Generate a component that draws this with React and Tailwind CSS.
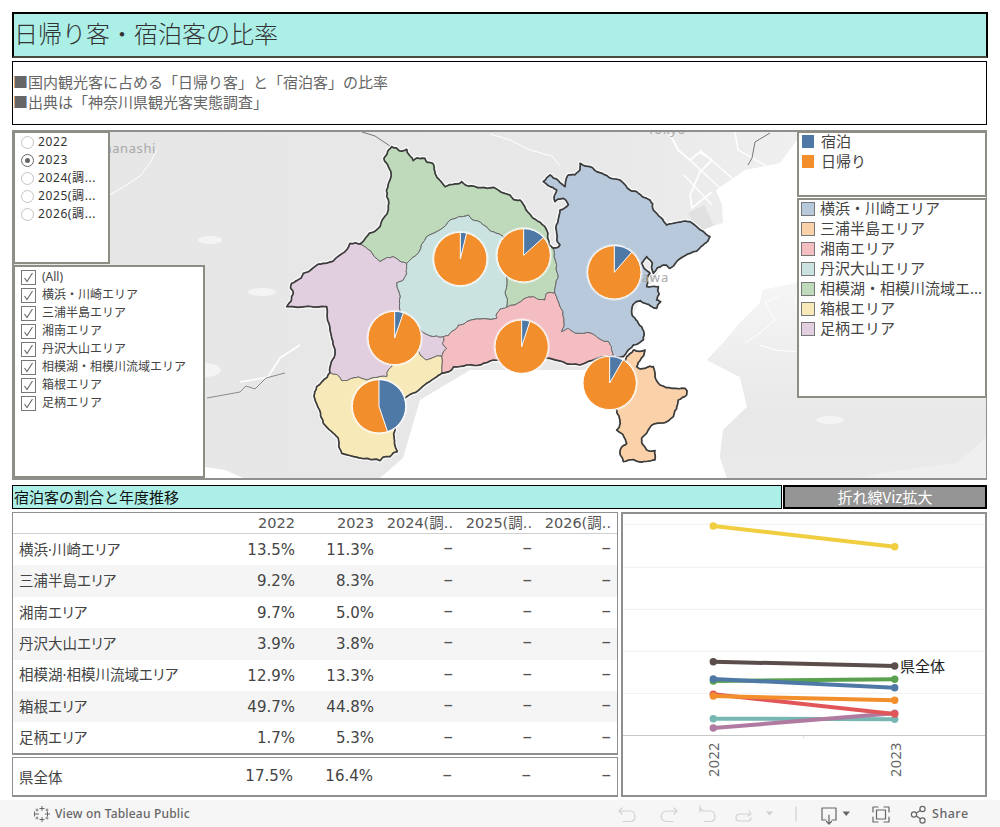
import React from "react";

const BLUE = "#4e79a7";
const ORANGE = "#f28e2b";

const hash = (x, y) => {
  const s = Math.sin(x * 12.9898 + y * 78.233) * 43758.5453;
  return s - Math.floor(s) - 0.5;
};
const jagPts = (pts, amp = 15, depth = 3) => {
  let cur = pts;
  let a = amp;
  for (let d = 0; d < depth; d++) {
    const out = [];
    cur.forEach((p, i) => {
      const q = cur[(i + 1) % cur.length];
      const mx = (p[0] + q[0]) / 2;
      const my = (p[1] + q[1]) / 2;
      const len = Math.hypot(p[0] - q[0], p[1] - q[1]);
      const k = Math.min(1, len / 36) * a;
      out.push(p, [mx + hash(mx, my) * k, my + hash(my, mx) * k]);
    });
    cur = out;
    a *= 0.65;
  }
  return cur;
};
const toD = (pts) => "M" + pts.map((p) => p[0].toFixed(1) + " " + p[1].toFixed(1)).join("L") + "Z";

const regions = [
  { fill: "#bfd9bb", pts: [[335,50],[355,60],[380,58],[400,92],[435,85],[458,100],[465,130],[495,170],[545,155],[580,168],[640,172],[690,195],[720,210],[760,265],[800,300],[820,355],[835,440],[825,490],[800,490],[795,510],[760,500],[735,505],[680,532],[680,440],[670,320],[610,285],[565,255],[510,270],[440,320],[380,400],[340,380],[300,395],[240,342],[300,290],[325,240],[320,200],[330,150],[325,110],[312,85]] },
  { fill: "#cae3e0", pts: [[565,255],[610,285],[670,320],[680,440],[680,532],[655,545],[650,565],[560,575],[535,585],[515,605],[490,620],[470,618],[425,605],[360,545],[350,458],[380,430],[380,400],[440,320],[510,270]] },
  { fill: "#e1cede", pts: [[210,340],[240,342],[300,395],[340,380],[380,400],[380,430],[350,458],[360,545],[425,605],[470,618],[490,620],[488,640],[500,655],[485,678],[440,690],[415,665],[350,690],[335,710],[320,740],[260,750],[215,745],[185,752],[150,728],[165,660],[150,600],[140,530],[20,530],[40,490],[35,460],[70,430],[130,400],[180,375]] },
  { fill: "#f8e9b9", pts: [[150,728],[185,752],[215,745],[260,750],[320,740],[335,710],[350,690],[415,665],[440,690],[485,678],[485,730],[440,760],[380,800],[345,900],[352,965],[330,980],[300,992],[260,985],[185,970],[175,925],[130,880],[105,810],[110,770]] },
  { fill: "#f3bdc1", pts: [[488,640],[490,620],[515,605],[535,585],[560,575],[650,565],[655,545],[680,532],[735,505],[760,500],[795,510],[800,490],[825,490],[850,560],[845,605],[865,595],[910,610],[965,630],[995,650],[1000,680],[900,705],[810,685],[640,690],[560,705],[485,730],[485,678],[500,655]] },
  { fill: "#b8c9db", pts: [[900,100],[950,125],[1020,150],[1070,185],[1110,210],[1120,240],[1160,285],[1230,275],[1290,320],[1270,345],[1230,370],[1170,415],[1150,405],[1120,430],[1100,380],[1085,400],[1110,430],[1100,470],[1135,470],[1130,510],[1142,515],[1130,535],[1095,520],[1070,515],[1055,545],[1065,565],[1085,590],[1090,630],[1060,645],[1030,680],[1000,680],[995,650],[965,630],[910,610],[865,595],[845,605],[850,560],[825,490],[835,440],[820,355],[840,345],[830,310],[840,240],[865,225],[850,205],[825,215],[830,180],[790,155],[810,135],[855,170],[865,135],[900,120]] },
  { fill: "#fbd1a9", pts: [[1060,660],[1095,660],[1070,710],[1095,715],[1120,710],[1140,765],[1215,775],[1220,795],[1195,810],[1190,835],[1180,860],[1130,880],[1085,925],[1100,960],[1125,962],[1125,990],[1075,995],[1030,995],[1020,965],[1040,940],[1010,900],[1020,870],[1010,840],[1000,800],[1040,680]] },
].map((r) => ({ ...r, jag: jagPts(r.pts) }));

// Edges that belong to one region only are the prefecture's outline.
const outline = (() => {
  const count = new Map();
  regions.forEach((r) => {
    r.jag.forEach((p, i) => {
      const q = r.jag[(i + 1) % r.jag.length];
      const a = p[0].toFixed(1) + "," + p[1].toFixed(1);
      const b = q[0].toFixed(1) + "," + q[1].toFixed(1);
      const key = a < b ? a + "|" + b : b + "|" + a;
      count.set(key, { n: (count.get(key)?.n || 0) + 1, a: p, b: q });
    });
  });
  let d = "";
  count.forEach((v) => {
    if (v.n === 1) d += `M${v.a[0].toFixed(1)} ${v.a[1].toFixed(1)}L${v.b[0].toFixed(1)} ${v.b[1].toFixed(1)}`;
  });
  return d;
})();

const pies = [
  { x: 541, y: 387, v: 3.8 },
  { x: 731, y: 376, v: 13.3 },
  { x: 1003, y: 427, v: 11.3 },
  { x: 725, y: 650, v: 5.0 },
  { x: 344, y: 624, v: 5.3 },
  { x: 297, y: 829, v: 44.8 },
  { x: 989, y: 759, v: 8.3 },
];

function Pie({ x, y, v }) {
  const r = 80;
  const a = (v / 100) * 2 * Math.PI;
  const ex = x + r * Math.sin(a);
  const ey = y - r * Math.cos(a);
  return (
    <g>
      <circle cx={x} cy={y} r={r + 5} fill="#ffffff" opacity="0.5" />
      <circle cx={x} cy={y} r={r} fill={ORANGE} stroke="#ffffff" strokeWidth="3" />
      <path d={`M${x} ${y}L${x} ${y - r}A${r} ${r} 0 0 1 ${ex} ${ey}Z`} fill={BLUE} stroke="#ffffff" strokeWidth="3" />
    </g>
  );
}

function MapCanvas() {
  return (
    <svg className="absolute inset-0 block" width="972" height="346" viewBox="14 132 972 346">
      <defs>
        <linearGradient id="landH" x1="0" x2="1" y1="0" y2="0">
          <stop offset="0" stopColor="#e6e6e6" />
          <stop offset="0.6" stopColor="#e8e8e8" />
          <stop offset="0.8" stopColor="#efefef" />
          <stop offset="1" stopColor="#efefef" />
        </linearGradient>
        <linearGradient id="landV" x1="0" x2="0" y1="0" y2="1">
          <stop offset="0" stopColor="#f7f7f7" />
          <stop offset="0.35" stopColor="#efefef" />
          <stop offset="0.7" stopColor="#e8e8e8" />
          <stop offset="1" stopColor="#eaeaea" />
        </linearGradient>
      </defs>
      <rect x="14" y="132" width="972" height="346" fill="url(#landH)" />
      <path d="M380 478L403 458L420 400L470 370L600 370L620 340L640 300L660 270L700 230L723 223L722 205L716 190L745 170L780 163L797 140L987 131L987 273L880 278L797 283L763 290L760 303L740 323L723 343L707 360L740 377L747 407L723 430L720 457L727 478Z" fill="#ffffff" />
      <path d="M987 273L880 278L797 283L763 290L760 303L740 323L723 343L707 360L740 377L747 407L723 430L720 457L727 478L860 478L880 473L957 463L987 437Z" fill="url(#landV)" />
      <path d="M205 467L225 470L243 478L205 478Z" fill="#ffffff" />
      <g fill="none" stroke="#ffffff" strokeWidth="1" strokeLinejoin="round">
        <path d="M110 195L128 184L140 176L150 163L157 150" />
        <path d="M490 134L510 140L530 150L552 156L560 166" />
        <path d="M670 134L678 150L690 160L700 152L712 160L700 172L690 195L692 208L712 192" strokeWidth="1.800" />
        <path d="M690 160L722 190M700 150L732 178M684 175L712 205" strokeWidth="1.400" />
        <path d="M735 132L738 150L765 165" strokeWidth="1.400" />
        <path d="M780 295L765 303L775 320L760 333L745 343" />
        <path d="M760 345L775 350L800 352" />
        <path d="M800 285L795 300L800 312" />
        <path d="M240 382L268 377L280 358L300 345" strokeWidth="1.500" />
      </g>
      <g fill="#f4f4f4">
        <ellipse cx="205" cy="370" rx="16" ry="7" />
        <ellipse cx="262" cy="292" rx="14" ry="4" />
        <ellipse cx="210" cy="240" rx="12" ry="4" />
        <ellipse cx="830" cy="420" rx="14" ry="4" />
      </g>
      <rect x="692" y="208" width="18" height="22" fill="#e1e1e1" transform="rotate(-25 701 219)" />
      <path d="M207 398L240 392L246 386L255 389L266 378L285 373" fill="none" stroke="#8a8a8a" strokeWidth="1" />
      <path d="M362 132L375 136L390 146" fill="none" stroke="#777777" strokeWidth="1" />
      <path d="M770 133L755 142L752 158L748 165" fill="none" stroke="#777777" strokeWidth="1" />
      <text x="156" y="153" textAnchor="end" fontSize="13" fill="#a8a8a8" letterSpacing="0.6" fontFamily="'Noto Sans',sans-serif">Yamanashi</text>
      <text x="686" y="134" textAnchor="end" fontSize="13" fill="#a8a8a8" letterSpacing="0.6" fontFamily="'Noto Sans',sans-serif">Tokyo</text>
      <g transform="translate(280 130) scale(0.33333)">
        <path d={outline} fill="none" stroke="#ffffff" strokeWidth="13" opacity="0.7" strokeLinecap="round" />
        {regions.map((r, i) => (
          <path key={i} d={toD(r.jag)} fill={r.fill} stroke="#666666" strokeWidth="3" strokeLinejoin="round" />
        ))}
        <path d={outline} fill="none" stroke="#3c3c3c" strokeWidth="5" strokeLinecap="round" strokeLinejoin="round" />
        <text x="1168" y="455" textAnchor="end" fontSize="39" fill="#a8a8a8" letterSpacing="3" fontFamily="'Noto Sans',sans-serif">Kanagawa</text>
        {pies.map((p, i) => (
          <Pie key={i} {...p} />
        ))}
      </g>
    </svg>
  );
}

const years = [
  { t: "2022", on: false },
  { t: "2023", on: true },
  { t: "2024(調...", on: false },
  { t: "2025(調...", on: false },
  { t: "2026(調...", on: false },
];

const filters = ["(All)", "横浜・川崎エリア", "三浦半島エリア", "湘南エリア", "丹沢大山エリア", "相模湖・相模川流域エリア", "箱根エリア", "足柄エリア"];

const areaLegend = [
  ["横浜・川崎エリア", "bg-[#b8c9db]"],
  ["三浦半島エリア", "bg-[#fbd1a9]"],
  ["湘南エリア", "bg-[#f3bdc1]"],
  ["丹沢大山エリア", "bg-[#cae3e0]"],
  ["相模湖・相模川流域エ...", "bg-[#bfd9bb]"],
  ["箱根エリア", "bg-[#f8e9b9]"],
  ["足柄エリア", "bg-[#e1cede]"],
];

const rows = [
  ["横浜·川崎エリア", "13.5%", "11.3%"],
  ["三浦半島エリア", "9.2%", "8.3%"],
  ["湘南エリア", "9.7%", "5.0%"],
  ["丹沢大山エリア", "3.9%", "3.8%"],
  ["相模湖·相模川流域エリア", "12.9%", "13.3%"],
  ["箱根エリア", "49.7%", "44.8%"],
  ["足柄エリア", "1.7%", "5.3%"],
];

const lines = [
  ["#76b7b2", 718.7, 719.3],
  ["#b07aa1", 728, 713.3],
  ["#59a14f", 681, 679.3],
  ["#4e79a7", 679, 687.7],
  ["#f1ce3f", 526, 546.7],
  ["#e15759", 694.3, 714],
  ["#f28e2b", 696, 700.3],
  ["#5a4d4a", 661.7, 666],
];

function Chart() {
  return (
    <svg className="block" width="362" height="281" viewBox="624 514 362 281">
      {[524.3, 567.3, 609.3, 651.3, 693.3].map((y) => (
        <line key={y} x1="624" x2="986" y1={y} y2={y} stroke="#f0f0f0" strokeWidth="1" />
      ))}
      <line x1="624" x2="986" y1="735.5" y2="735.5" stroke="#c8c8c8" strokeWidth="1" />
      <line x1="804.5" x2="804.5" y1="736" y2="739" stroke="#e6e6e6" strokeWidth="1" />
      {lines.map(([c, a, b]) => (
        <g key={c}>
          <line x1="714.3" x2="895.7" y1={a} y2={b} stroke={c} strokeWidth="4" />
          <circle cx="714.3" cy={a} r="3.7" fill={c} />
          <circle cx="895.7" cy={b} r="3.7" fill={c} />
        </g>
      ))}
      <text x="901" y="671.5" fontSize="15" fill="#222222">県全体</text>
      <text transform="translate(719.5 777) rotate(-90)" fontSize="14.500" fill="#666666" letterSpacing="0.4">2022</text>
      <text transform="translate(901.500 777) rotate(-90)" fontSize="14.500" fill="#666666" letterSpacing="0.4">2023</text>
    </svg>
  );
}

function Dash() {
  return <span className="text-[19px] leading-none text-[#555]">–</span>;
}

function Cells({ a, b }) {
  return (
    <>
      <div className="pt-px pr-px text-right text-[15px]">{a}</div>
      <div className="pt-px pr-px text-right text-[15px]">{b}</div>
      <div className="pr-px text-right"><Dash /></div>
      <div className="pr-px text-right"><Dash /></div>
      <div className="pr-px text-right"><Dash /></div>
    </>
  );
}

const gridCols = "grid grid-cols-[204px_79px_79px_79px_79px_79px] items-center";

function Toolbar() {
  const s = { fill: "none", strokeWidth: 1.2, strokeLinecap: "round", strokeLinejoin: "round" };
  return (
    <div className="flex h-[27px] w-full items-center bg-[#f6f6f6] text-[12px] text-[#666]">
      <svg className="ml-[33px]" width="18" height="18" viewBox="0 0 18 18" stroke="#666" strokeWidth="1" fill="none">
        <path d="M9 1v5M6.500 3.500h5M9 12v5M6.500 14.500h5M1 9h5M1.500 6.500v5M12 9h5M14.500 6.500v5" />
        <path d="M4 3.500v3M2.500 5h3M14 3.500v3M12.500 5h3M4 11.500v3M2.500 13h3M14 11.500v3M12.500 13h3" strokeWidth="0.8" />
      </svg>
      <span className="ml-[4px] font-medium tracking-[0.2px]">View on Tableau Public</span>
      <div className="flex-1" />
      <svg width="400" height="27" viewBox="600 800 400 27" className="block shrink-0" {...s}>
        <g stroke="#d2d2d2">
          <path d="M622 808l-3 3 3 3M619 811h11c3 0 5 2.500 5 5.500s-2 5-5 5h-7" />
          <path d="M674 808l3 3-3 3M677 811h-10c-3 0-6 2.500-6 5.500s3 5 6 5h6" />
          <path d="M700 806v6M700 808l3 3M704 811h6c3 0 5 2.500 5 5.500s-2 5-5 5h-6" />
          <path d="M749 811l2 3-3 2M750 814h-10c-2.500 0-4 1.500-4 3.500s1.500 3.500 4 3.500h8c2 0 3-1.500 3-3" />
          <path d="M796 807v14" />
        </g>
        <path d="M766 811.500h7l-3.500 4z" fill="#cfcfcf" stroke="none" />
        <g stroke="#666">
          <path d="M826 820h-4v-12h14v12h-4M829 815v9M826.500 821.500l2.500 2.500 2.500-2.500" />
          <path d="M873 812v-5h5M884 807h5v5M889 817v5h-5M878 822h-5v-5" />
          <rect x="876.500" y="810" width="9" height="9" />
          <circle cx="914" cy="814.500" r="2.600" />
          <circle cx="922.500" cy="809" r="2.600" />
          <circle cx="922.500" cy="820.500" r="2.600" />
          <path d="M916.500 813l3.700-2.500M916.500 816l3.700 2.800" />
        </g>
        <path d="M842.500 811.500h7.500l-3.750 4.500z" fill="#666" stroke="none" />
        <text x="932" y="818" fontSize="12.500" fontWeight="500" fill="#666" stroke="none" letterSpacing="0.5">Share</text>
      </svg>
    </div>
  );
}

export default function App() {
  return (
    <div className="flex h-[827px] w-[1000px] flex-col overflow-hidden bg-white pt-3 font-['Noto_Sans','Noto_Sans_CJK_JP',sans-serif] text-[#555]">
      <div className="mx-3 flex h-[46px] w-[976px] items-center border-2 border-black border-b-[#4b4b3f] bg-[#abefe6] pb-[4px] text-[24px] leading-none font-light text-[#333] font-['Noto_Sans_CJK_JP',sans-serif]">
        日帰り客・宿泊客の比率
      </div>

      <div className="mx-3 mt-[3px] h-[64px] w-[975px] border border-black pt-[10px] text-[15px] leading-[20px] text-[#666] font-['Noto_Sans_CJK_JP',sans-serif]">
        <div>■国内観光客に占める「日帰り客」と「宿泊客」の比率</div>
        <div>■出典は「神奈川県観光客実態調査」</div>
      </div>

      <div className="relative mx-3 mt-[5px] h-[350px] w-[975px] shrink-0 border-2 border-[#8f8f8f]">
        <MapCanvas />

        <div className="absolute left-[-1px] top-[-1px] h-[133px] w-[97px] border-2 border-[#8e8d84] bg-white text-[12px] tracking-[0.6px] text-[#333]">
          {years.map((y) => (
            <div key={y.t} className="flex h-[18px] items-center whitespace-nowrap pl-[6px]">
              <span className={`mr-[4px] flex h-[13px] w-[13px] shrink-0 items-center justify-center rounded-full border ${y.on ? "border-[#666]" : "border-[#c4c4c4]"}`}>
                {y.on && <span className="h-[5px] w-[5px] rounded-full bg-[#666]" />}
              </span>
              {y.t}
            </div>
          ))}
        </div>

        <div className="absolute left-[-1px] top-[133px] h-[213px] w-[192px] border-2 border-[#8e8d84] bg-white pt-px text-[12px] text-[#444]">
          {filters.map((f) => (
            <div key={f} className="flex h-[18px] items-center whitespace-nowrap pl-[6px]">
              <span className="mr-[6px] flex h-[15px] w-[15px] shrink-0 items-center justify-center border border-[#777] bg-white">
                <svg width="11" height="11" viewBox="0 0 11 11" fill="none" stroke="#666" strokeWidth="1.100"><path d="M1.500 6l2.500 3.500L9.500 1" /></svg>
              </span>
              {f}
            </div>
          ))}
        </div>

        <div className="absolute left-[783px] top-[-1px] h-[66px] w-[190px] border-2 border-[#8e8d84] bg-white pl-[3px] text-[15px] text-[#444]">
          <div className="flex h-[16px] items-center"><span className="mr-[7px] h-[13px] w-[12px] bg-[#4e79a7]" />宿泊</div>
          <div className="mt-[2px] flex h-[20px] items-center"><span className="mr-[7px] h-[13px] w-[12px] bg-[#f28e2b]" />日帰り</div>
        </div>

        <div className="absolute left-[783px] top-[66px] h-[200px] w-[190px] border-2 border-[#8e8d84] bg-white pl-[2px] text-[15px] text-[#444]">
          {areaLegend.map(([t, c]) => (
            <div key={t} className="flex h-[20px] -translate-y-px items-center whitespace-nowrap">
              <span className={`mr-[5px] h-[14px] w-[14px] shrink-0 border border-[#777] ${c}`} />
              <span className="-translate-y-px">{t}</span>
            </div>
          ))}
        </div>
      </div>

      <div className="mx-3 mt-[5px] flex h-[24px] w-[975px] gap-px">
        <div className="flex h-[24px] w-[770px] items-center border border-black bg-[#abefe6] pl-[1px] text-[15px] text-[#111] font-['Noto_Sans_CJK_JP',sans-serif]">
          宿泊客の割合と年度推移
        </div>
        <div className="flex h-[24px] flex-1 items-center justify-center border-2 border-black bg-[#959595] text-[15px] text-white font-['Noto_Sans_CJK_JP',sans-serif]">
          折れ線Viz拡大
        </div>
      </div>

      <div className="mx-3 mt-[3px] flex w-[975px] gap-[3px]">
        <div className="w-[607px] text-[14.500px] text-[#444] font-['DejaVu_Sans','Noto_Sans_CJK_JP',sans-serif]">
          <div className="h-[243px] border border-[#8f8f8f] border-b-2">
            <div className={`${gridCols} h-[21px] border-b border-[#cfcfcf] text-[#555]`}>
              <div />
              <div className="pr-px text-right">2022</div>
              <div className="pr-px text-right">2023</div>
              <div className="whitespace-nowrap pr-px text-right">2024(調..</div>
              <div className="whitespace-nowrap pr-px text-right">2025(調..</div>
              <div className="whitespace-nowrap pr-px text-right">2026(調..</div>
            </div>
            {rows.map(([n, a, b], i) => (
              <div key={n} className={`${gridCols} h-[31.400px] ${i % 2 === 1 ? "bg-[#f5f5f5]" : ""}`}>
                <div className="whitespace-nowrap pl-[6px] font-['Noto_Sans','Noto_Sans_CJK_JP',sans-serif] [font-feature-settings:'palt']">{n}</div>
                <Cells a={a} b={b} />
              </div>
            ))}
          </div>
          <div className={`${gridCols} mt-[2px] h-[40px] border border-[#8f8f8f] border-b-2`}>
            <div className="pl-[6px] font-['Noto_Sans_CJK_JP',sans-serif]">県全体</div>
            <div className="pr-[3px] text-right text-[15px]">17.5%</div>
            <div className="pr-[2px] text-right text-[15px]">16.4%</div>
            <div className="pr-[2px] text-right"><Dash /></div>
            <div className="pr-[2px] text-right"><Dash /></div>
            <div className="pr-px text-right"><Dash /></div>
          </div>
        </div>
        <div className="h-[285px] w-[366px] border-2 border-[#8f8f8f]">
          <Chart />
        </div>
      </div>

      <div className="mt-auto">
        <Toolbar />
      </div>
    </div>
  );
}
